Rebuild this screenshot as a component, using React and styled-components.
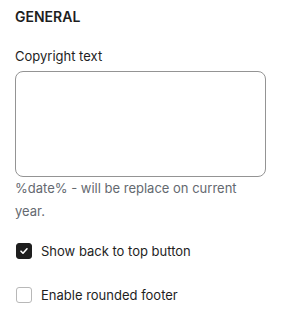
import React from 'react'
import styled, { createGlobalStyle } from 'styled-components'

const Global = createGlobalStyle`
  html, body {
    margin: 0;
    padding: 0;
    background: #fff;
  }
  body {
    font-family: Inter, "Liberation Sans", sans-serif;
    color: #1e1e1e;
  }
`

const Panel = styled.div`
  padding: 7px 16px 0 15px;
  width: 251px;
`

const Heading = styled.h2`
  margin: 0;
  font-size: 14px;
  font-weight: 600;
  line-height: 20px;
  color: #1e1e1e;
`

const Field = styled.div`
  margin-top: 19px;
`

const Label = styled.label`
  display: block;
  font-size: 13px;
  line-height: 20px;
  margin-bottom: 5px;
`

const TextArea = styled.textarea`
  display: block;
  box-sizing: border-box;
  width: 251px;
  height: 106px;
  margin: 0;
  border: 1px solid #949494;
  border-radius: 8px;
  resize: none;
  outline: none;
`

const Help = styled.p`
  margin: 0;
  font-size: 13px;
  line-height: 23px;
  color: #646970;
`

const Check = styled.label`
  display: flex;
  align-items: center;
  gap: 9px;
  margin-top: ${p => p.$top}px;
  font-size: 13px;
  line-height: 20px;
  padding-left: 1px;
`

const Box = styled.span`
  box-sizing: border-box;
  width: 16px;
  height: 16px;
  border-radius: 3px;
  border: 1px solid ${p => (p.$on ? '#1e1e1e' : '#b8b8b8')};
  background: ${p => (p.$on ? '#1e1e1e' : '#fff')};
  display: flex;
  align-items: center;
  justify-content: center;
`

const Checkbox = ({ on, top, children }) => (
  <Check $top={top}>
    <Box $on={on}>
      {on && (
        <svg width="10" height="10" viewBox="0 0 10 10">
          <path d="M2 5.2l2 2 4-4.4" fill="none" stroke="#fff" strokeWidth="1.6" strokeLinecap="round" strokeLinejoin="round" />
        </svg>
      )}
    </Box>
    {children}
  </Check>
)

const App = () => (
  <>
    <Global />
    <Panel>
      <Heading>GENERAL</Heading>
      <Field>
        <Label>Copyright text</Label>
        <TextArea />
        <Help>%date% - will be replace on current year.</Help>
      </Field>
      <Checkbox on top={18}>Show back to top button</Checkbox>
      <Checkbox top={24}>Enable rounded footer</Checkbox>
    </Panel>
  </>
)

export default App
